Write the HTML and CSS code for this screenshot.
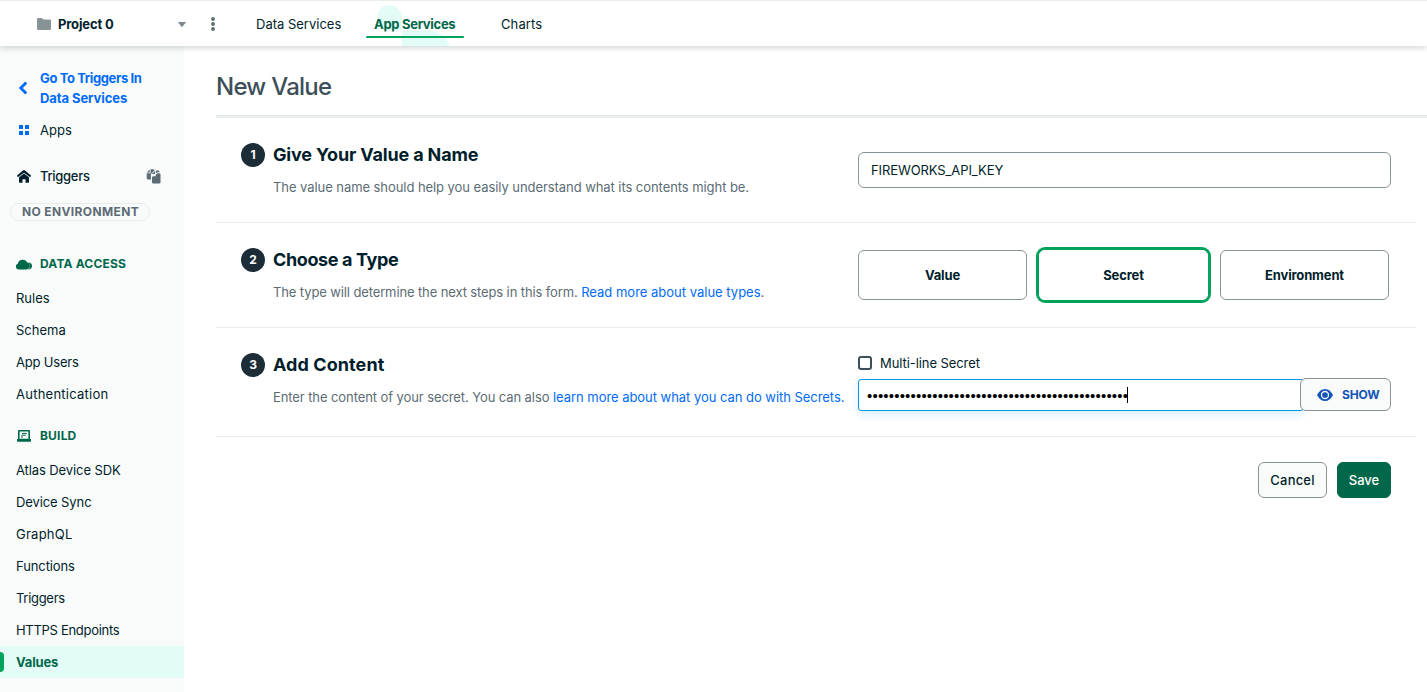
FILE: index.html
```html
<!DOCTYPE html>
<html lang="en">
<head>
<meta charset="utf-8">
<title>New Value</title>
<link rel="stylesheet" href="styles.css">
</head>
<body>
<header class="topbar">
  <div class="project">
    <svg class="folder" width="14" height="12" viewBox="0 0 14 12"><path d="M0 1.2A1.2 1.2 0 0 1 1.2 0H4.6Q5.2 0 5.6.6L6.3 1.4H12.8A1.2 1.2 0 0 1 14 2.6V10.800A1.200 1.200 0 0 1 12.800 12H1.200A1.200 1.200 0 0 1 0 10.800Z" fill="#889397"/></svg>
    <span class="project-name">Project 0</span>
    <svg class="caret" width="8" height="5" viewBox="0 0 8 5"><path d="M.4 0H7.6Q8.2 0 7.8.6L4.4 4.7Q4 5.2 3.600 4.700L.2.6Q-.2 0 .4 0Z" fill="#7c888d"/></svg>
    <svg class="kebab" width="4" height="14" viewBox="0 0 4 14" fill="#5c6c75"><circle cx="2" cy="2" r="1.900"/><circle cx="2" cy="7" r="1.900"/><circle cx="2" cy="12" r="1.900"/></svg>
  </div>
  <nav class="tabs">
    <a class="tab tab-data">Data Services</a>
    <a class="tab tab-active">
      <svg class="blob" width="98" height="46" viewBox="0 0 98 46" fill="#e3fcf7"><path d="M11 17.500A12.500 12.500 0 0 1 36 17.500V30H23.500A12.500 12.500 0 0 1 11 17.500Z"/><path d="M36 30H57A27 27 0 0 1 84 46H36Z"/></svg>
      <span class="tab-label">App Services</span>
    </a>
    <a class="tab tab-charts">Charts</a>
  </nav>
</header>
<div class="layout">
  <aside class="sidebar">
    <a class="side-row back"><svg width="10" height="14" viewBox="0 0 10 14"><path d="M8.300 1.500L2.800 7L8.300 12.500" fill="none" stroke="#016bf8" stroke-width="2.800"/></svg><span><span class="back-first">Go To Triggers In</span><br>Data Services</span></a>
    <a class="side-row apps"><svg width="10" height="10" viewBox="0 0 10 10" fill="#016bf8"><path d="M0 0H4V4H0ZM6 0H10V4H6ZM0 6H4V10H0ZM6 6H10V10H6Z"/></svg><span>Apps</span></a>
    <div class="side-row app-name">
      <svg width="14" height="13" viewBox="0 0 14 13" fill="#001e2b"><path d="M6.300.3Q7 -.3 7.700.3L13.700 5.300Q14.200 6 13.700 6.600Q13.200 7.300 12.500 6.800L7 2.700L1.500 6.800Q.8 7.300 .3 6.600Q-.2 6 .3 5.300Z"/><path d="M7 3.500L12 7.300V12Q12 12.700 11.300 12.700H8.500V9.200H5.500V12.700H2.700Q2 12.700 2 12V7.300Z"/></svg>
      <span>Triggers</span>
      <svg class="copy" width="15" height="15" viewBox="0 0 15 15" fill="#5c6c75"><path d="M3.700.5V3.400H.8ZM4.600.3H7.200Q8.300.3 8.600 1.200L5.600 4.300Q4.900 5 4.900 6V10.500H2Q.7 10.500 .7 9.200V4.300H4.600Z"/><path d="M9 1.900V5.100H5.800ZM9.900 1.600H12.200Q13.500 1.600 13.500 2.900V3.300H12.300Q11 3.300 10.300 4L9.900 4.400Z"/><path d="M9.700 5.700L11.500 4.200H13.200Q14.500 4.200 14.500 5.500V13.200Q14.500 14.500 13.200 14.500H7.300Q6 14.500 6 13.200V8.300L6.800 7.200H9.700Z"/></svg>
    </div>
    <div class="env-badge"><span>NO ENVIRONMENT</span></div>
    <h3 class="group first"><svg width="16" height="11" viewBox="0 0 16 11" fill="#00684a"><path d="M3 10.500A3 3 0 0 1 1.800 4.700A5 5 0 0 1 11 3.200A3.700 3.700 0 0 1 10.500 10.500Z"/><path d="M12.600 3.300Q16 4 16 7.100Q15.900 10.500 12.200 10.500Q14.400 9.200 14 6.400Q13.700 4.600 12.600 3.300Z"/></svg><span>DATA ACCESS</span></h3>
    <a class="item">Rules</a>
    <a class="item">Schema</a>
    <a class="item tight">App Users</a>
    <a class="item wide">Authentication</a>
    <h3 class="group build"><svg width="14" height="12" viewBox="0 0 14 12"><path fill-rule="evenodd" d="M1 1Q1 0 2 0H12Q13 0 13 1V9H14V11Q14 11.700 13.300 11.700H.7Q0 11.700 0 11V9H1ZM2.600 1.500V8.800H11.400V1.500Z" fill="#00684a"/><path d="M5 3.400H9.800M4.400 5.200H8.800M4 7H6" stroke="#00684a" stroke-width="1"/></svg><span>BUILD</span></h3>
    <a class="item snug">Atlas Device SDK</a>
    <a class="item snug">Device Sync</a>
    <a class="item wide">GraphQL</a>
    <a class="item snug">Functions</a>
    <a class="item tighter">Triggers</a>
    <a class="item tighter">HTTPS Endpoints</a>
    <a class="item selected">Values</a>
  </aside>
  <main class="main">
    <h1 class="title">New Value</h1>
    <section class="step">
      <div class="step-text">
        <h2 class="step-head"><span class="num">1</span><span class="head-name">Give Your Value a Name</span></h2>
        <p class="desc desc-name">The value name should help you easily understand what its contents might be.</p>
      </div>
      <div class="control"><div class="name-input">FIREWORKS_API_KEY</div></div>
    </section>
    <section class="step">
      <div class="step-text">
        <h2 class="step-head"><span class="num">2</span><span class="head-type">Choose a Type</span></h2>
        <p class="desc desc-type">The type will determine the next steps in this form. <a class="link">Read more about value types</a>.</p>
      </div>
      <div class="control types"><div class="type">Value</div><div class="type type-on">Secret</div><div class="type">Environment</div></div>
    </section>
    <section class="step step-content">
      <div class="step-text">
        <h2 class="step-head"><span class="num">3</span><span class="head-content">Add Content</span></h2>
        <p class="desc desc-content">Enter the content of your secret. You can also <a class="link">learn more about what you can do with Secrets.</a></p>
      </div>
      <div class="control">
        <div class="check-row"><span class="checkbox"></span><span>Multi-line Secret</span></div>
        <div class="secret-row">
          <div class="secret-input"><span class="dots">••••••••••••••••••••••••••••••••••••••••••••••••</span><span class="cursor"></span></div>
          <div class="show"><svg width="16" height="12" viewBox="0 0 16 12"><path d="M0 6Q3.200 0 8 0T16 6Q12.800 12 8 12T0 6Z" fill="#1254b7"/><circle cx="8" cy="6" r="3.500" fill="none" stroke="#f9fbfa" stroke-width="1.300"/></svg><span>SHOW</span></div>
        </div>
      </div>
    </section>
    <div class="actions"><div class="btn cancel">Cancel</div><div class="btn save">Save</div></div>
  </main>
</div>
</body>
</html>
```

FILE: styles.css
```css
* { box-sizing: border-box; }
body {
  margin: 0;
  height: 692px;
  overflow: hidden;
  display: flex;
  flex-direction: column;
  background: #fff;
  color: #001e2b;
  font: 400 13px/20px Inter, "Open Sans", sans-serif;
}
h1, h2, h3, p { margin: 0; }
svg { display: block; flex: none; }
span, a { white-space: nowrap; }

.topbar {
  position: relative;
  z-index: 2;
  flex: none;
  height: 46px;
  display: flex;
  border-top: 1px solid #e8edeb;
  background: #fff;
  box-shadow: 0 2px 6px rgba(0, 30, 43, .18);
}
.project { width: 216px; padding: 1px 0 0 37px; display: flex; align-items: center; flex: none; }
.project-name { margin-left: 7px; width: 120px; font-weight: 700; letter-spacing: -.15px; }
.kebab { margin-left: 25px; }
.tabs { display: flex; padding-top: 1px; }
.tab { line-height: 44px; }
.tab-data { padding-left: 40px; width: 150px; }
.tab-active { position: relative; width: 98px; padding-left: 8px; color: #00684a; font-weight: 700; letter-spacing: -.3px; }
.tab-active::after { content: ""; position: absolute; left: 0; bottom: 8px; width: 98px; height: 2px; border-radius: 2px; background: #00a35c; }
.blob { position: absolute; left: 0; top: -2px; }
.tab-label { position: relative; }
.tab-charts { margin-left: 37px; letter-spacing: .1px; }

.layout { flex: 1; display: flex; min-height: 0; }
.sidebar { width: 184px; flex: none; background: #f9fbfa; padding-top: 22px; }
.side-row { display: flex; align-items: center; }
.back { height: 40px; padding-left: 18px; gap: 12px; color: #016bf8; font-weight: 700; letter-spacing: -.08px; }
.back-first { letter-spacing: -.38px; }
.apps { height: 20px; margin-top: 12px; padding-left: 19px; gap: 11px; }
.app-name { height: 20px; margin-top: 26px; padding-left: 17px; gap: 9px; font-weight: 500; letter-spacing: -.3px; }
.copy { margin-left: auto; margin-right: 23px; }
.env-badge {
  margin: 17px 0 0 10px;
  width: 140px;
  height: 18px;
  border: 1px solid #e8edeb;
  border-radius: 9px;
  padding-left: 11px;
  color: #5c6c75;
  font-size: 12px;
  line-height: 16px;
  font-weight: 700;
  letter-spacing: .37px;
}
.group { display: flex; align-items: center; height: 44px; padding: 16px 0 8px 16px; gap: 8px; color: #00684a; font-size: 12px; font-weight: 700; letter-spacing: .18px; }
.first { margin-top: 17px; }
.build { gap: 9px; padding-left: 17px; }
.item { display: block; height: 32px; padding-left: 16px; line-height: 33px; }
.snug { letter-spacing: -.1px; }
.tight { letter-spacing: -.2px; }
.tighter { letter-spacing: -.3px; }
.wide { letter-spacing: .25px; }
.selected { position: relative; background: #e3fcf7; color: #00684a; font-weight: 700; letter-spacing: -.15px; }
.selected::before { content: ""; position: absolute; left: 0; top: 6px; width: 4px; height: 20px; border-radius: 0 4px 4px 0; background: #00a35c; }

.main { flex: 1; padding: 25px 0 0 32px; }
.title { height: 47px; border-bottom: 3px solid #e8edeb; color: #3d4f58; font-size: 24px; line-height: 32px; font-weight: 500; letter-spacing: -.75px; }
.step { width: 1200px; height: 105px; display: flex; border-bottom: 1px solid #e8edeb; padding-left: 25px; }
.step-content { height: 109px; }
.step-text { width: 617px; padding-top: 25px; flex: none; }
.step-head { display: flex; align-items: center; height: 24px; gap: 8px; font-size: 18px; font-weight: 700; }
.head-name { letter-spacing: -.16px; }
.head-type { letter-spacing: -.38px; }
.head-content { letter-spacing: .08px; }
.num { width: 24px; height: 24px; border-radius: 50%; background: #1c2d38; color: #fff; text-align: center; font-size: 12px; line-height: 24px; }
.desc { margin: 10px 0 0 32px; white-space: nowrap; color: #5c6c75; line-height: 20px; }
.desc-name { letter-spacing: -.065px; }
.desc-type { letter-spacing: -.12px; }
.desc-type .link { letter-spacing: 0; }
.desc-content { letter-spacing: -.09px; }
.desc-content .link { letter-spacing: -.04px; }
.link { color: #016bf8; }
.control { width: 533px; }
.name-input { margin-top: 34px; height: 36px; border: 1px solid #889397; border-radius: 6px; padding-left: 12px; line-height: 34px; letter-spacing: -.1px; }
.types { display: flex; gap: 12px; padding-top: 27px; }
.type { width: 169px; height: 50px; border: 1px solid #889397; border-radius: 6px; text-align: center; line-height: 49px; font-weight: 700; letter-spacing: -.15px; }
.type-on { border-color: #fff; box-shadow: 0 0 0 3px #00a35c; }
.check-row { display: flex; align-items: center; gap: 8px; height: 20px; margin-top: 25px; letter-spacing: -.08px; }
.checkbox { width: 14px; height: 14px; border: 2px solid #3d4f58; border-radius: 3px; }
.secret-row { display: flex; margin-top: 5px; height: 33px; align-items: flex-end; }
.secret-input { width: 446px; height: 32px; border: 1px solid #0498ec; border-radius: 3px; padding-left: 8px; display: flex; align-items: center; box-shadow: 0 4px 8px rgba(4, 152, 236, .15); flex: none; }
.dots { font: 15px/30px "Liberation Sans", Arial, sans-serif; letter-spacing: .19px; color: #000; padding-top: 2px; }
.cursor { width: 1px; height: 16px; margin-left: -1px; background: #000; }
.show { position: relative; margin-left: -4px; width: 91px; height: 33px; border: 1px solid #889397; border-radius: 6px; background: #f9fbfa; color: #1254b7; padding-left: 16px; gap: 9px; display: flex; align-items: center; font-size: 12px; font-weight: 700; letter-spacing: -.2px; }
.actions { display: flex; justify-content: flex-end; gap: 10px; width: 1175px; padding-top: 25px; }
.btn { height: 36px; border: 1px solid #889397; border-radius: 6px; background: #f9fbfa; text-align: center; line-height: 35px; font-weight: 500; }
.cancel { width: 69px; letter-spacing: .2px; }
.save { width: 54px; background: #00684a; border-color: #00684a; color: #fff; }
```
